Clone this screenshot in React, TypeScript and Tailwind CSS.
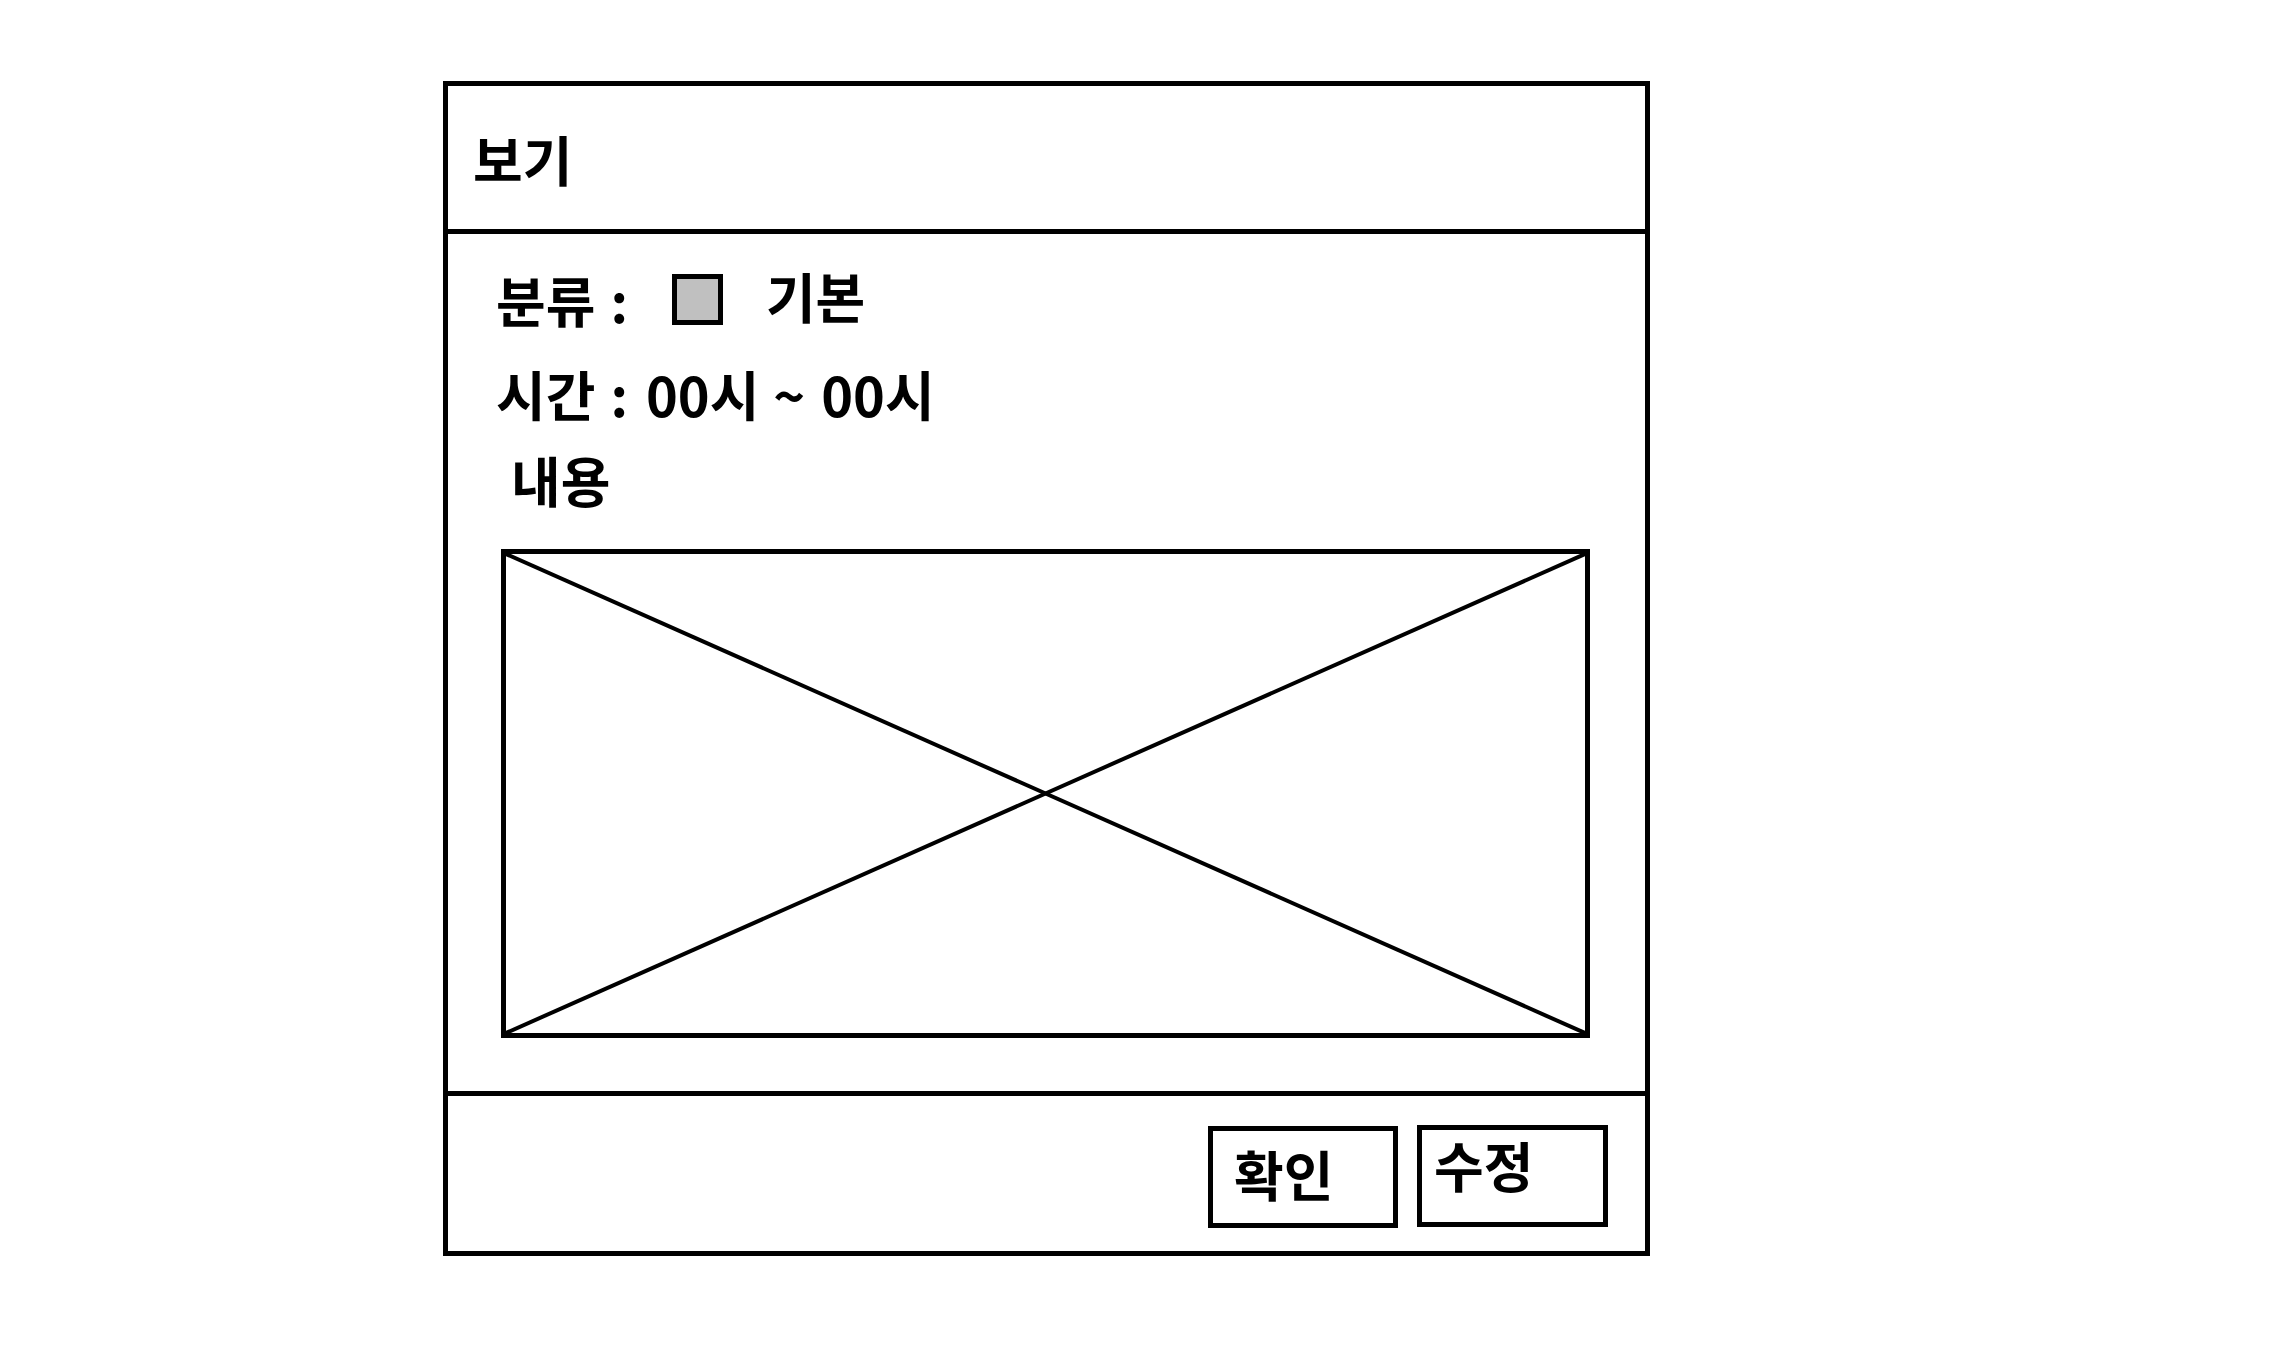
import React from "react";

const font = "font-['Noto_Sans_CJK_KR','Noto_Sans',sans-serif] font-bold text-black";

export default function App() {
  return (
    <div className={`min-h-[1366px] w-[2278px] bg-white pl-[443px] pt-[81px] ${font}`}>
      <div className="flex h-[1175px] w-[1207px] flex-col border-[5px] border-black">
        {/* header */}
        <div className="flex h-[148px] shrink-0 items-center border-b-[5px] border-black pl-[25px] pt-[2px]">
          <span className="text-[54px] leading-[50px]">보기</span>
        </div>
        {/* body */}
        <div className="flex flex-1 flex-col border-b-[5px] border-black pl-[48px] pt-[40px]">
          <div className="flex items-center text-[54px] leading-[50px]">
            <span>분류</span>
            <span className="ml-[15px]">:</span>
            <span className="ml-[44px] h-[51px] w-[51px] border-[5px] border-black bg-[#c0c0c0]" />
            <span className="ml-[43px] -mt-[8px]">기본</span>
          </div>
          <div className="mt-[44px] flex items-center text-[54px] leading-[50px]">
            <span>시간</span>
            <span className="ml-[15px]">:</span>
            <span className="ml-[18px]">00시</span>
            <span className="ml-[14px]">~</span>
            <span className="ml-[16px]">00시</span>
          </div>
          <div className="mt-[36px] pl-[15px] text-[54px] leading-[50px]">내용</div>
          <div className="relative ml-[5px] mt-[44px] h-[489px] w-[1089px] border-[5px] border-black">
            <svg className="absolute inset-0" width="1079" height="479" viewBox="0 0 1079 479">
              <line x1="0" y1="0" x2="1079" y2="479" stroke="black" strokeWidth="4" />
              <line x1="0" y1="479" x2="1079" y2="0" stroke="black" strokeWidth="4" />
            </svg>
          </div>
        </div>
        {/* footer */}
        <div className="flex h-[155px] shrink-0 items-start justify-end gap-[19px] pr-[37px] pt-[30px]">
          <div className="h-[102px] w-[190px] border-[5px] border-black pl-[21px] pt-[18px] text-[54px] leading-[50px]">확인</div>
          <div className="-mt-[1px] h-[102px] w-[191px] border-[5px] border-black pl-[12px] pt-[10px] text-[54px] leading-[50px]">수정</div>
        </div>
      </div>
    </div>
  );
}
